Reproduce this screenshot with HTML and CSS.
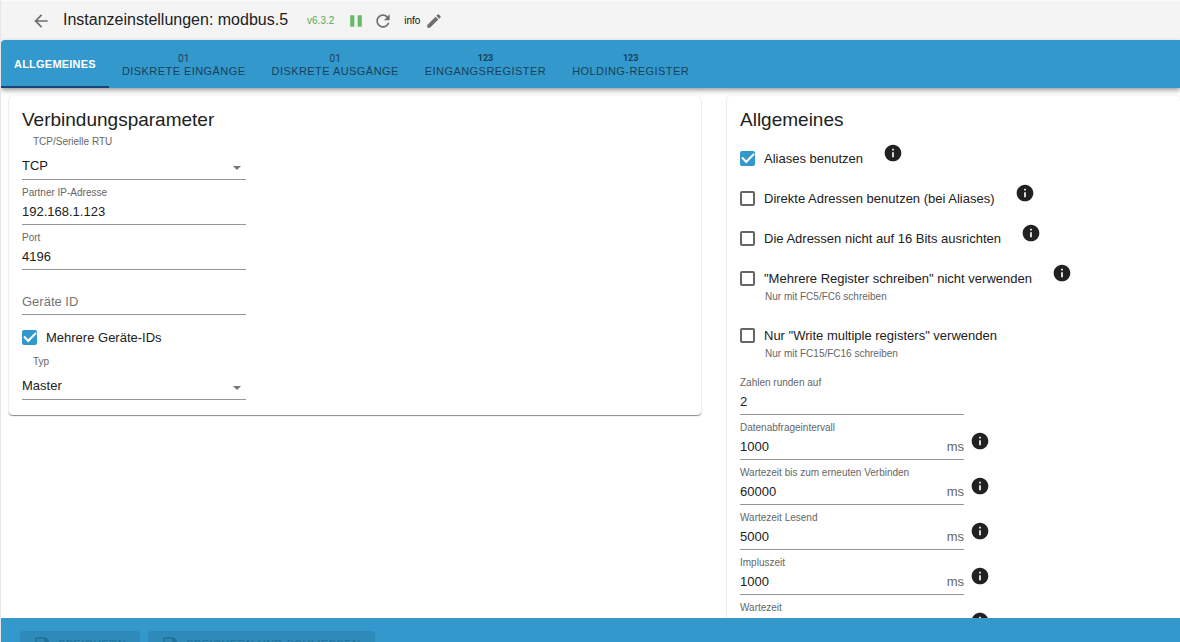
FILE: index.html
```html
<!DOCTYPE html>
<html lang="de">
<head>
<meta charset="utf-8">
<title>Instanzeinstellungen: modbus.5</title>
<link rel="stylesheet" href="styles.css">
</head>
<body>
<svg class="sprite" aria-hidden="true">
  <symbol id="info" viewBox="0 0 24 24"><path d="M12 2C6.48 2 2 6.48 2 12s4.48 10 10 10 10-4.48 10-10S17.52 2 12 2zm1 15h-2v-6h2v6zm0-8h-2V7h2v2z"/></symbol>
  <symbol id="arrow" viewBox="0 0 10 5"><path d="M1 0h8L5 4z"/></symbol>
  <symbol id="save" viewBox="0 0 24 24"><path d="M17 3H5c-1.110 0-2 .9-2 2v14c0 1.100.89 2 2 2h14c1.100 0 2-.9 2-2V7l-4-4zm-5 16c-1.660 0-3-1.340-3-3s1.340-3 3-3 3 1.340 3 3-1.340 3-3 3zm3-10H5V5h10v4z"/></symbol>
</svg>
<header class="toolbar">
  <button class="icon-button back" aria-label="Zurück"><svg viewBox="0 0 24 24"><path d="M20 11H7.830l5.590-5.590L12 4l-8 8 8 8 1.410-1.410L7.830 13H20v-2z"/></svg></button>
  <h1 class="title">Instanzeinstellungen: modbus.5</h1>
  <span class="version">v6.3.2</span>
  <button class="icon-button pause" aria-label="Pause"><svg viewBox="0 0 24 24"><path d="M5 19h5V5H5v14zm9-14v14h5V5h-5z"/></svg></button>
  <button class="icon-button reload" aria-label="Neu starten"><svg viewBox="0 0 24 24"><path d="M17.650 6.350C16.200 4.900 14.210 4 12 4c-4.420 0-7.990 3.580-7.990 8s3.570 8 7.990 8c3.730 0 6.840-2.550 7.730-6h-2.080c-.82 2.330-3.040 4-5.650 4-3.310 0-6-2.690-6-6s2.690-6 6-6c1.660 0 3.140.69 4.220 1.780L13 11h7V4l-2.350 2.350z"/></svg></button>
  <span class="level">info</span>
  <button class="icon-button edit" aria-label="Bearbeiten"><svg viewBox="0 0 24 24"><path d="M3 17.250V21h3.750L17.810 9.940l-3.750-3.750L3 17.250zM20.710 7.040c.39-.39.39-1.020 0-1.410l-2.340-2.340c-.39-.39-1.020-.39-1.410 0l-1.830 1.830 3.750 3.750 1.830-1.830z"/></svg></button>
</header>
<nav class="tabs" role="tablist">
  <button class="tab active" role="tab" aria-selected="true">ALLGEMEINES</button>
  <button class="tab" role="tab"><span class="tab-icon">01</span>DISKRETE EINGÄNGE</button>
  <button class="tab" role="tab"><span class="tab-icon">01</span>DISKRETE AUSGÄNGE</button>
  <button class="tab" role="tab"><span class="tab-icon number">123</span>EINGANGSREGISTER</button>
  <button class="tab" role="tab"><span class="tab-icon number">123</span>HOLDING-REGISTER</button>
</nav>
<main class="content">
  <section class="card">
    <h2 class="heading">Verbindungsparameter</h2>
    <div class="select-field">
      <label for="transport">TCP/Serielle RTU</label>
      <div class="select-box"><select id="transport"><option>TCP</option></select><svg><use href="#arrow"/></svg></div>
    </div>
    <div class="field"><label for="ip">Partner IP-Adresse</label><div class="input-box"><input id="ip" value="192.168.1.123"></div></div>
    <div class="field"><label for="port">Port</label><div class="input-box"><input id="port" value="4196"></div></div>
    <div class="field unlabeled"><div class="input-box"><input aria-label="Geräte ID" placeholder="Geräte ID"></div></div>
    <div class="option compact"><label><input type="checkbox" checked>Mehrere Geräte-IDs</label></div>
    <div class="select-field">
      <label for="type">Typ</label>
      <div class="select-box"><select id="type"><option>Master</option></select><svg><use href="#arrow"/></svg></div>
    </div>
  </section>
  <section class="card">
    <h2 class="heading spaced">Allgemeines</h2>
    <div class="option"><label><input type="checkbox" checked>Aliases benutzen</label><svg class="info"><use href="#info"/></svg></div>
    <div class="option"><label><input type="checkbox">Direkte Adressen benutzen (bei Aliases)</label><svg class="info"><use href="#info"/></svg></div>
    <div class="option"><label><input type="checkbox">Die Adressen nicht auf 16 Bits ausrichten</label><svg class="info"><use href="#info"/></svg></div>
    <div class="noted">
      <div class="option"><label><input type="checkbox">"Mehrere Register schreiben" nicht verwenden</label><svg class="info"><use href="#info"/></svg></div>
      <p class="note">Nur mit FC5/FC6 schreiben</p>
    </div>
    <div class="noted">
      <div class="option"><label><input type="checkbox">Nur "Write multiple registers" verwenden</label></div>
      <p class="note">Nur mit FC15/FC16 schreiben</p>
    </div>
    <div class="field"><label for="round">Zahlen runden auf</label><div class="input-box"><input id="round" value="2"></div></div>
    <div class="field-row"><div class="field"><label for="poll">Datenabfrageintervall</label><div class="input-box"><input id="poll" value="1000"><span class="unit">ms</span></div></div><svg class="info"><use href="#info"/></svg></div>
    <div class="field-row"><div class="field"><label for="recon">Wartezeit bis zum erneuten Verbinden</label><div class="input-box"><input id="recon" value="60000"><span class="unit">ms</span></div></div><svg class="info"><use href="#info"/></svg></div>
    <div class="field-row"><div class="field"><label for="timeout">Wartezeit Lesend</label><div class="input-box"><input id="timeout" value="5000"><span class="unit">ms</span></div></div><svg class="info"><use href="#info"/></svg></div>
    <div class="field-row"><div class="field"><label for="pulse">Impluszeit</label><div class="input-box"><input id="pulse" value="1000"><span class="unit">ms</span></div></div><svg class="info"><use href="#info"/></svg></div>
    <div class="field-row"><div class="field"><label for="wait">Wartezeit</label><div class="input-box"><input id="wait"></div></div><svg class="info"><use href="#info"/></svg></div>
  </section>
</main>
<footer class="actions">
  <button class="action" disabled><svg><use href="#save"/></svg>SPEICHERN</button>
  <button class="action" disabled><svg><use href="#save"/></svg>SPEICHERN UND SCHLIESSEN</button>
</footer>
</body>
</html>
```
FILE: styles.css
```css
* { box-sizing: border-box; }
body {
  margin: 0;
  height: 100vh;
  display: flex;
  flex-direction: column;
  overflow: hidden;
  border-left: 1px solid #e6e6e6;
  background: #fff;
  color: #212121;
  font-family: "Liberation Sans", Arial, sans-serif;
  font-size: 13px;
}
button, input, select { font: inherit; color: inherit; border: 0; padding: 0; margin: 0; background: none; }
h1, h2, p { margin: 0; font-weight: 400; }
svg { fill: currentColor; display: block; flex: none; }
.sprite { position: absolute; width: 0; height: 0; }

.toolbar { flex: none; height: 40px; display: flex; align-items: center; padding-left: 30px; background: #f4f4f4; border-top: 1px solid #fafafa; }
.icon-button { width: 20px; height: 20px; color: #6f6f6f; }
.icon-button svg { width: 100%; height: 100%; }
.title { margin-left: 12px; font-size: 16px; line-height: 20px; padding-bottom: 2px; }
.version { margin-left: 19px; font-size: 10px; color: #5aa85c; }
.pause { margin-left: 12px; color: #66bb6a; }
.reload { margin-left: 7px; }
.level { margin-left: 11px; font-size: 10px; color: #111; }
.edit { margin-left: 5px; width: 18px; height: 18px; }

.tabs { flex: none; height: 48px; display: flex; background: #3399cc; border-radius: 4px 0 0 0; box-shadow: 0 2px 4px rgba(0,0,0,.3), 0 3px 6px rgba(0,0,0,.12); position: relative; }
.tab { display: flex; flex-direction: column; align-items: center; justify-content: center; padding: 2px 13px 0; color: #17415a; font-size: 11px; line-height: 13px; letter-spacing: 0.04em; white-space: nowrap; }
.tab.active { color: #fff; font-weight: 700; letter-spacing: 0.02em; border-bottom: 2px solid #164477; }
.tab-icon { font: 400 10px/13px Roboto, sans-serif; letter-spacing: 0; }
.tab-icon.number { font-size: 9px; font-weight: 700; }

.content { flex: 1; min-height: 0; overflow: hidden; display: grid; grid-template-columns: 692fr 453fr; gap: 26px; align-items: start; padding: 8px 0 0 8px; }
.card { padding: 9px 13px 15px; border-radius: 4px; box-shadow: 0 1px 1px rgba(0,0,0,.45), 0 0 2px rgba(0,0,0,.1); }
.heading { font-size: 19px; line-height: 29px; }
.spaced { margin-bottom: 4px; }

.field, .select-field { width: 224px; }
.field { padding-top: 6px; }
.field label, .select-field label { display: block; font-size: 10px; line-height: 13px; color: #666; }
.unlabeled { padding-top: 19px; }
.input-box { display: flex; align-items: center; height: 26px; border-bottom: 1px solid #949494; }
.input-box input { flex: 1; min-width: 0; height: 25px; outline: 0; }
.input-box input::placeholder { color: #757575; opacity: 1; }
.unit { color: #666; }
.select-field { padding-top: 1px; }
.select-field label { padding-left: 11px; margin-bottom: 4px; }
.select-box { position: relative; border-bottom: 1px solid #949494; }
.select-box select { display: block; width: 100%; height: 27px; appearance: none; }
.select-box svg { position: absolute; right: 4px; top: 14px; width: 10px; height: 5px; color: #757575; pointer-events: none; }

.option { display: flex; align-items: flex-start; gap: 20px; height: 40px; }
.option label { display: flex; align-items: center; gap: 9px; height: 40px; }
.option.compact, .option.compact label { height: 34px; }
.option.compact { margin-top: 5px; }
.option input { appearance: none; width: 15px; height: 15px; border: 2px solid #666; border-radius: 2px; display: grid; place-items: center; }
.option input:checked { border-color: #3399cc; background: #3399cc; }
.option input:checked::before { content: ""; width: 10px; height: 5px; margin-top: -3px; border: solid #fff; border-width: 0 0 2px 2px; transform: rotate(-45deg); }
.info { width: 20px; height: 20px; color: #212121; }
.option .info { margin-top: 5px; }
.note { margin: -8px 0 0 25px; padding-bottom: 10px; font-size: 10px; line-height: 13px; color: #666; }
.noted + .noted { margin-top: 2px; }
.field-row { display: flex; gap: 6px; }
.field-row .info { margin-top: 16px; }

.actions { flex: none; max-height: 24px; overflow: hidden; display: flex; align-items: flex-start; gap: 8px; padding: 13px 19px 0; background: #3399cc; position: relative; }
.action { flex: none; display: flex; align-items: center; gap: 7px; height: 26px; padding: 0 14px 0 13px; border-radius: 3px; background: #2e8ab8; color: #236f97; font-size: 11px; letter-spacing: 0.04em; }
.action svg { width: 18px; height: 18px; }
```
